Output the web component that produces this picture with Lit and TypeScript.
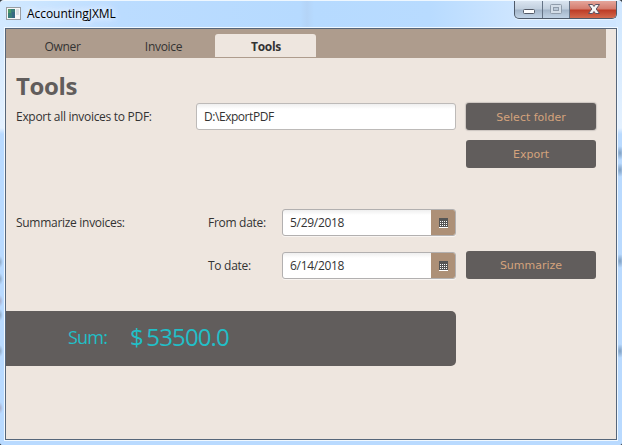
import { LitElement, html, css, svg } from "lit";
import { customElement, property } from "lit/decorators.js";

@customElement("date-field")
class DateField extends LitElement {
  @property() value = "";

  static styles = css`
    :host {
      display: flex;
      box-sizing: border-box;
      height: 27px;
      border: 1px solid #b2b0b0;
      border-radius: 3px;
      overflow: hidden;
      background: linear-gradient(#efefef, #fff 5px);
      box-shadow: 0 1px 0 #f8f4f1;
    }
    .value {
      flex: 1;
      padding-left: 7px;
      font: 12px/26px "Open Sans", "Noto Sans", sans-serif;
      letter-spacing: -0.3px;
      color: #333;
    }
    .picker {
      width: 24px;
      display: flex;
      align-items: center;
      justify-content: center;
      background: #ad9077;
    }
    svg {
      display: block;
    }
  `;

  render() {
    const dots = [3, 5, 7].flatMap((y) => [1, 3, 5, 7].map((x) => ({ x, y })));
    return html`
      <span class="value">${this.value}</span>
      <span class="picker">
        <svg width="9" height="10" shape-rendering="crispEdges">
          <rect width="9" height="9" fill="#555" />
          <rect y="9" width="9" height="1" fill="#fff" />
          ${dots.map((d) => svg`<rect x=${d.x} y=${d.y} width="1" height="1" fill="#fff" />`)}
        </svg>
      </span>
    `;
  }
}

@customElement("app-root")
class AppRoot extends LitElement {
  static styles = css`
    :host {
      display: block;
      width: 622px;
      height: 445px;
      overflow: hidden;
      background: #333b45;
      font: 12px/16px "Open Sans", "Noto Sans", sans-serif;
      color: #333;
    }
    .window {
      box-sizing: border-box;
      height: 445px;
      padding: 0 4px 4px;
      border-top: 1px solid #eef7ff;
      border-radius: 4px 4px 3px 3px;
      display: flex;
      flex-direction: column;
      background:
        radial-gradient(ellipse 3px 6px at 0 261px, #8faac6, transparent),
        radial-gradient(ellipse 3px 6px at 0 278px, #8faac6, transparent),
        radial-gradient(ellipse 3px 6px at 0 300px, #a9aecb, transparent),
        radial-gradient(ellipse 3px 6px at 0 314px, #8faac6, transparent),
        radial-gradient(ellipse 3px 6px at 0 350px, #8faac6, transparent),
        radial-gradient(ellipse 3px 6px at 0 407px, #a9aecb, transparent),
        radial-gradient(ellipse 4px 7px at 620px 152px, #7f9fc1, transparent),
        radial-gradient(ellipse 4px 7px at 620px 169px, #7f9fc1, transparent),
        radial-gradient(ellipse 4px 7px at 620px 260px, #7f9fc1, transparent),
        radial-gradient(ellipse 4px 7px at 620px 350px, #7f9fc1, transparent),
        linear-gradient(#d3e9ff00 0, #d3e9ff 30px, #e4f1ff 127px, #b9daff 133px, #b9daff) right 0 top 0 / 6px 100% no-repeat,
        linear-gradient(#d3e9ff00 0, #d3e9ff 30px, #e4f1ff 127px, #b9daff 133px, #b9daff) left 0 top 0 / 6px 100% no-repeat,
        linear-gradient(90deg, #d2e9ff, #bbdcff 120px, #b6daff 300px, #b4d4f7 307px, #b6daff 314px, #b8dbff 430px, #cfe6ff 520px, #cfe6ff) top / 100% 40px no-repeat,
        #b9daff;
    }
    .titlebar {
      flex: none;
      height: 26px;
      display: flex;
      padding-left: 2px;
    }
    .app-icon {
      margin-top: 6px;
      display: block;
    }
    .title {
      margin: 4px 0 0 5px;
      height: 18px;
      line-height: 18px;
      color: #000;
      letter-spacing: -0.05px;
      text-shadow: 0 0 8px #fff, 0 0 8px #fff;
    }
    .controls {
      margin-left: auto;
      margin-right: 1px;
      box-sizing: border-box;
      width: 103px;
      height: 18px;
      display: flex;
      border: 1px solid #4e5a6a;
      border-top: 0;
      border-radius: 0 0 5px 5px;
      overflow: hidden;
      background: linear-gradient(#d9e4f0, #c1cfde 8px, #a3b5c9 9px, #c0d2e5);
      box-shadow: 0 1px 0 #e8f4ff;
    }
    .control {
      box-sizing: border-box;
      width: 27px;
      border-right: 1px solid #647386;
      display: flex;
    }
    .control.minimize {
      width: 28px;
    }
    .control.close {
      width: 46px;
      border: 0;
      background: linear-gradient(#e4a59b, #d47b6d 8px, #bd3b25 9px, #d36a4d);
    }
    .client {
      flex: 1;
      box-sizing: border-box;
      width: 614px;
      border: 1px solid #f0f8ff;
    }
    .scene {
      box-sizing: border-box;
      height: 412px;
      border: 1px solid #56667a;
      background: #eee6df;
    }
    .tabs {
      box-sizing: border-box;
      width: 600px;
      height: 29px;
      padding: 5px 0 1px 7px;
      display: flex;
      background: #ae9c8d;
    }
    .tab {
      width: 101px;
      box-sizing: border-box;
      padding-right: 2px;
      line-height: 25px;
      text-align: center;
      letter-spacing: -0.3px;
    }
    .tab.selected {
      padding: 0 0 0 1px;
      background: #eee6df;
      border-radius: 3px 3px 0 0;
      font-weight: 700;
    }
    h1 {
      margin: 12px 0 0 10px;
      height: 33px;
      font: 700 24px/31px "Open Sans", "Noto Sans", sans-serif;
      letter-spacing: -0.35px;
      color: #615d5c;
    }
    .form {
      display: grid;
      grid-template-columns: 180px 12px 74px 174px 130px 1fr;
      grid-template-rows: 27px 38px 68px 43px;
      align-items: end;
      padding-left: 10px;
    }
    .export-label { grid-area: 1 / 1; }
    .path { grid-area: 1 / 2 / 2 / 5; }
    .select { grid-area: 1 / 5; }
    .export { grid-area: 2 / 5; }
    .sum-label { grid-area: 3 / 1; }
    .from-label { grid-area: 3 / 3; }
    .from { grid-area: 3 / 4; }
    .to-label { grid-area: 4 / 3; }
    .to { grid-area: 4 / 4; }
    .summarize { grid-area: 4 / 5; }
    .label {
      line-height: 27px;
      white-space: nowrap;
      letter-spacing: -0.29px;
    }
    .path {
      box-sizing: border-box;
      height: 27px;
      padding-left: 7px;
      border: 1px solid #bdbab8;
      border-radius: 3px;
      line-height: 26px;
      letter-spacing: -0.45px;
      background: linear-gradient(#efefef, #fff 5px);
    }
    .button {
      margin-left: 10px;
      width: 130px;
      height: 28px;
      border-radius: 3px;
      background: #615d5c;
      color: #d4a37c;
      font: 11px/29px "DejaVu Sans", sans-serif;
      text-align: center;
    }
    .select {
      height: 27px;
      box-shadow: 0 0 1px 1px #cbc5c0;
    }
    .sum {
      box-sizing: border-box;
      margin-top: 32px;
      width: 450px;
      height: 55px;
      padding-left: 62px;
      display: flex;
      border-radius: 0 5px 5px 0;
      background: #615d5c;
      color: #22bfc7;
      line-height: 52px;
      white-space: nowrap;
    }
    .caption {
      width: 62px;
      font-size: 18px;
      letter-spacing: -0.8px;
    }
    .amount {
      font-size: 24px;
      letter-spacing: -0.85px;
      word-spacing: -2px;
    }
  `;

  render() {
    return html`
      <div class="window">
        <div class="titlebar">
          <svg class="app-icon" width="16" height="15">
            <rect x=".5" y=".5" width="14" height="12" fill="#f7f7f7" stroke="#999da2" />
            <rect x="2" y="2" width="7" height="9" fill="#397d79" />
            <rect x="2" y="2" width="3" height="4" fill="#4c9868" />
            <rect x="6" y="5" width="3" height="6" fill="#376982" />
            <rect x="10" y="2" width="3" height="6" fill="#dce1e5" />
          </svg>
          <span class="title">AccountingJXML</span>
          <div class="controls">
            <span class="control minimize">
              <svg width="27" height="17">
                <rect x="8.5" y="8.5" width="11" height="4" rx="1" fill="#fff" stroke="#535a67" />
              </svg>
            </span>
            <span class="control">
              <svg width="26" height="17">
                <rect x="7.5" y="3.5" width="11" height="9" rx="1" fill="#d3dde8" stroke="#8f9cab" />
                <rect x="10.5" y="6.5" width="5" height="3" fill="#bac8d7" stroke="#8f9cab" />
              </svg>
            </span>
            <span class="control close">
              <svg width="46" height="17">
                <path
                  d="M18.5 3.5h4l1.5 2 1.5-2h4l-3.3 4.5 3.3 4.5h-4l-1.5-2-1.5 2h-4l3.3-4.5z"
                  fill="#f5f5f5"
                  stroke="#5b5160"
                />
              </svg>
            </span>
          </div>
        </div>
        <div class="client">
          <div class="scene">
            <div class="tabs">
              <span class="tab">Owner</span>
              <span class="tab">Invoice</span>
              <span class="tab selected">Tools</span>
            </div>
            <h1>Tools</h1>
            <div class="form">
              <span class="label export-label">Export all invoices to PDF:</span>
              <div class="path">D:\\ExportPDF</div>
              <div class="button select">Select folder</div>
              <div class="button export">Export</div>
              <span class="label sum-label">Summarize invoices:</span>
              <span class="label from-label">From date:</span>
              <date-field class="from" value="5/29/2018"></date-field>
              <span class="label to-label">To date:</span>
              <date-field class="to" value="6/14/2018"></date-field>
              <div class="button summarize">Summarize</div>
            </div>
            <div class="sum">
              <span class="caption">Sum:</span>
              <span class="amount">$ 53500.0</span>
            </div>
          </div>
        </div>
      </div>
    `;
  }
}
